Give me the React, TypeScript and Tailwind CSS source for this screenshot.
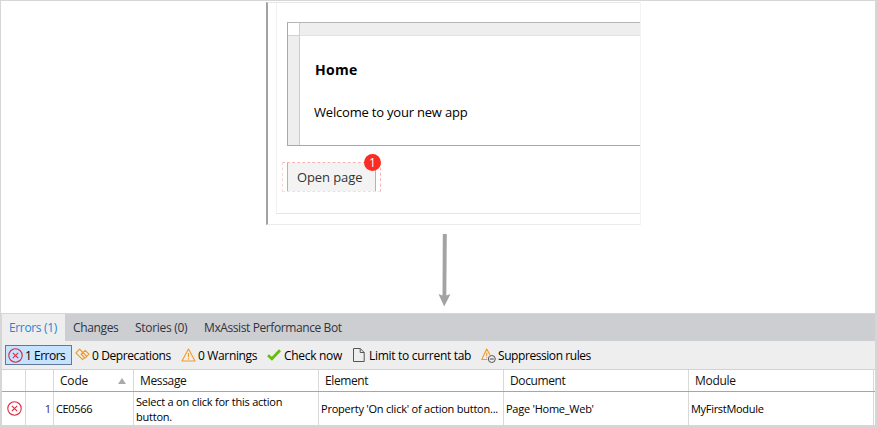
import type { ReactNode } from "react";

function ErrorIcon() {
  return (
    <svg className="block h-[15px] w-[15px] shrink-0" viewBox="0 0 15 15" fill="none" stroke="#e0283f" strokeWidth="1.1">
      <circle cx="7.5" cy="7.5" r="6.7" />
      <path d="M4.8 4.8l5.4 5.4M10.2 4.8l-5.4 5.4" />
    </svg>
  );
}

function DeprecationIcon() {
  return (
    <svg className="block h-[14px] w-[15px] shrink-0" viewBox="0 0 15 14" fill="none" stroke="#f19a2b" strokeWidth="1.2" strokeLinejoin="round">
      <path d="M4.6 1.2L.9 4.9l6.7 6.7 2-2-3.4-3.3 1.7-1.8z" />
      <path d="M6.2 6.3l4-4 3.8 3.8-4.2 4.2M7.9 4.5l3.7 3.7" />
    </svg>
  );
}

function WarningIcon() {
  return (
    <svg className="block h-[14px] w-[15px] shrink-0" viewBox="0 0 15 14" fill="none" stroke="#f19a2b" strokeWidth="1.1" strokeLinejoin="round">
      <path d="M7.5 1L14 13H1L7.5 1z" />
      <path d="M7.5 5v4.2M7.5 10.2v1.2" />
    </svg>
  );
}

function CheckIcon() {
  return (
    <svg className="block h-[12px] w-[14px] shrink-0" viewBox="0 0 14 12" fill="none" stroke="#66bd0c" strokeWidth="2.7">
      <path d="M1 6.2l3.9 3.6L13 1.3" />
    </svg>
  );
}

function PageIcon() {
  return (
    <svg className="block h-[14px] w-[12px] shrink-0" viewBox="0 0 12 14" fill="none" stroke="#555" strokeWidth="1">
      <path d="M.5.5h6.7l4 4v9H.5V.5zM7.2.5v4h4" />
    </svg>
  );
}

function SuppressionIcon() {
  return (
    <svg className="block h-[15px] w-[15px] shrink-0" viewBox="0 0 15 15" fill="none" strokeLinejoin="round">
      <path d="M6.2 11.5H.8L5.7.9l3.4 6M5.7 4.5v3.8M5.7 9.3v1" stroke="#f19a2b" strokeWidth="1.1" />
      <circle cx="10.8" cy="11" r="3.5" stroke="#555" />
      <path d="M8.8 11h4" stroke="#555" strokeWidth="1.1" />
    </svg>
  );
}

function Cell({ className, children }: { className: string; children?: ReactNode }) {
  return <div className={`flex shrink-0 items-center border-r border-[#d9d9d9] ${className}`}>{children}</div>;
}

function PagePreview() {
  return (
    <div className="ml-[265px] mt-px flex h-[223px] w-[374px] flex-col border-b border-l-2 border-t border-b-[#ebebeb] border-l-[#a2a2a2] border-t-[#e6e6e6] shadow-[1px_0_0_#f3f3f3]">
      <div className="ml-[8px] flex h-[211px] flex-col border-b border-l border-b-[#e6e6e6] border-l-[#f0f0f0] pl-[10px] pt-[19px]">
        <div className="grid h-[124px] shrink-0 grid-cols-[12px_1fr] grid-rows-[13px_1fr] border-y border-l border-b-[#a8a8a8] border-l-[#a8a8a8] border-t-[#b5b5b5]">
          <div className="border-b border-r border-[#d0d0d0] bg-white" />
          <div className="border-b border-[#e2e2e2] bg-[#eee]" />
          <div className="border-r border-[#ccc] bg-[#eee]" />
          <div className="pl-[14px] pt-[24px] text-black">
            <h1 className="ml-px text-[14px] font-bold leading-[20px]"><span className="tracking-[0.3px]">Home</span></h1>
            <p className="mt-[22px] text-[13px] leading-[20px]"><span className="tracking-[-0.2px]">Welcome to your new app</span></p>
          </div>
        </div>
        <div className="relative -ml-[5px] mt-[16px] h-[30px] w-[99px] shrink-0 border border-dashed border-[#f7b5b2] border-b-[#f8dcdb] border-l-[#f8d5d3] pl-[4px]">
          <button className="block h-[28px] w-[89px] border-x border-x-[#b3b3b3] bg-[#f3f3f3] text-left text-[13px] leading-[29px] text-[#333]">
            <span className="ml-[9px] tracking-[-0.1px]">Open page</span>
          </button>
          <span className="absolute -top-[9px] left-[81px] flex h-[17px] w-[17px] items-center justify-center rounded-full bg-[#fb2c24] text-[12px] leading-none text-white">1</span>
        </div>
      </div>
    </div>
  );
}

export default function App() {
  return (
    <div className="flex h-[427px] w-[877px] flex-col overflow-hidden border-l border-r-2 border-t border-[#d6d6d6] bg-white font-['Open_Sans','Noto_Sans',sans-serif] text-[12px] text-[#111]">
      <PagePreview />
      <svg className="ml-[437px] mt-[9px] block h-[73px] w-[13px] shrink-0" viewBox="0 0 13 73" fill="#a3a3a3">
        <path d="M4.8 0h4L8.3 61.5 12.5 60 6.2 72.5.5 60l4 1.5z" />
      </svg>
      <div className="mt-[6px] flex h-[114px] flex-col border-b-2 border-l border-t border-[#d6d6d6]">
        <nav className="flex h-[27px] shrink-0 bg-[#cdced2] leading-[28px] text-[#2e3440]">
          <div className="w-[63px] bg-[#eee] pl-[7px] text-[#2b84d2]"><span className="tracking-[-0.35px]">Errors (1)</span></div>
          <div className="w-[62px] pl-[8px]"><span className="tracking-[-0.35px]">Changes</span></div>
          <div className="w-[69px] pl-[8px]"><span className="tracking-[-0.3px]">Stories (0)</span></div>
          <div className="pl-[8px]"><span className="tracking-[-0.4px]">MxAssist Performance Bot</span></div>
        </nav>
        <div className="flex h-[29px] shrink-0 items-center whitespace-nowrap border-b border-[#d2d2d2] bg-[#eee] text-black">
          <button className="ml-[3px] flex h-[20px] w-[67px] items-center border border-[#60799a] bg-[#c5e2ff] pl-[2px]"><ErrorIcon /><span className="ml-[2px] pt-px tracking-[-0.5px]">1 Errors</span></button>
          <button className="ml-[3px] flex w-[106px] items-center"><DeprecationIcon /><span className="ml-[2px] pt-[2px] tracking-[-0.4px]">0 Deprecations</span></button>
          <button className="flex w-[86px] items-center"><WarningIcon /><span className="ml-[2px] pt-[2px] tracking-[-0.35px]">0 Warnings</span></button>
          <button className="flex w-[86px] items-center"><CheckIcon /><span className="ml-[3px] pt-[2px] tracking-[-0.3px]">Check now</span></button>
          <button className="flex w-[128px] items-center"><PageIcon /><span className="ml-[4px] pt-[2px] tracking-[-0.3px]">Limit to current tab</span></button>
          <button className="flex items-center"><SuppressionIcon /><span className="ml-[2px] pt-[2px] tracking-[-0.43px]">Suppression rules</span></button>
        </div>
        <div className="flex h-[22px] shrink-0 border-b border-[#a6a6a6]">
          <Cell className="w-[24px]" />
          <Cell className="w-[28px]" />
          <Cell className="w-[80px] justify-between pl-[6px] pr-[7px]">
            <span className="tracking-[-0.2px]">Code</span>
            <svg className="h-[6px] w-[8px]" viewBox="0 0 8 6" fill="#aaa"><path d="M4 0l4 6H0z" /></svg>
          </Cell>
          <Cell className="w-[185px] pl-[6px]"><span className="tracking-[-0.35px]">Message</span></Cell>
          <Cell className="w-[185px] pl-[6px]"><span className="tracking-[-0.4px]">Element</span></Cell>
          <Cell className="w-[185px] pl-[6px]"><span className="tracking-[-0.4px]">Document</span></Cell>
          <Cell className="w-[185px] pl-[6px]"><span className="tracking-[-0.3px]">Module</span></Cell>
        </div>
        <div className="flex h-[33px] shrink-0 whitespace-nowrap text-[11px] text-black">
          <Cell className="w-[24px] pl-[5px]"><ErrorIcon /></Cell>
          <Cell className="w-[28px] justify-end pr-[2px] pt-px text-[#39234f]">1</Cell>
          <Cell className="w-[80px] pl-[2px] pt-px"><span className="tracking-[-0.35px]">CE0566</span></Cell>
          <Cell className="w-[185px] pl-[2px] leading-[15px]"><span className="tracking-[-0.23px]">Select a on click for this action<br />button.</span></Cell>
          <Cell className="w-[185px] pl-[2px] pt-px"><span className="tracking-[-0.23px]">Property 'On click' of action button...</span></Cell>
          <Cell className="w-[185px] pl-[2px] pt-px"><span className="tracking-[-0.25px]">Page 'Home_Web'</span></Cell>
          <Cell className="w-[185px] pl-[2px] pt-px"><span className="tracking-[-0.3px]">MyFirstModule</span></Cell>
        </div>
      </div>
    </div>
  );
}
